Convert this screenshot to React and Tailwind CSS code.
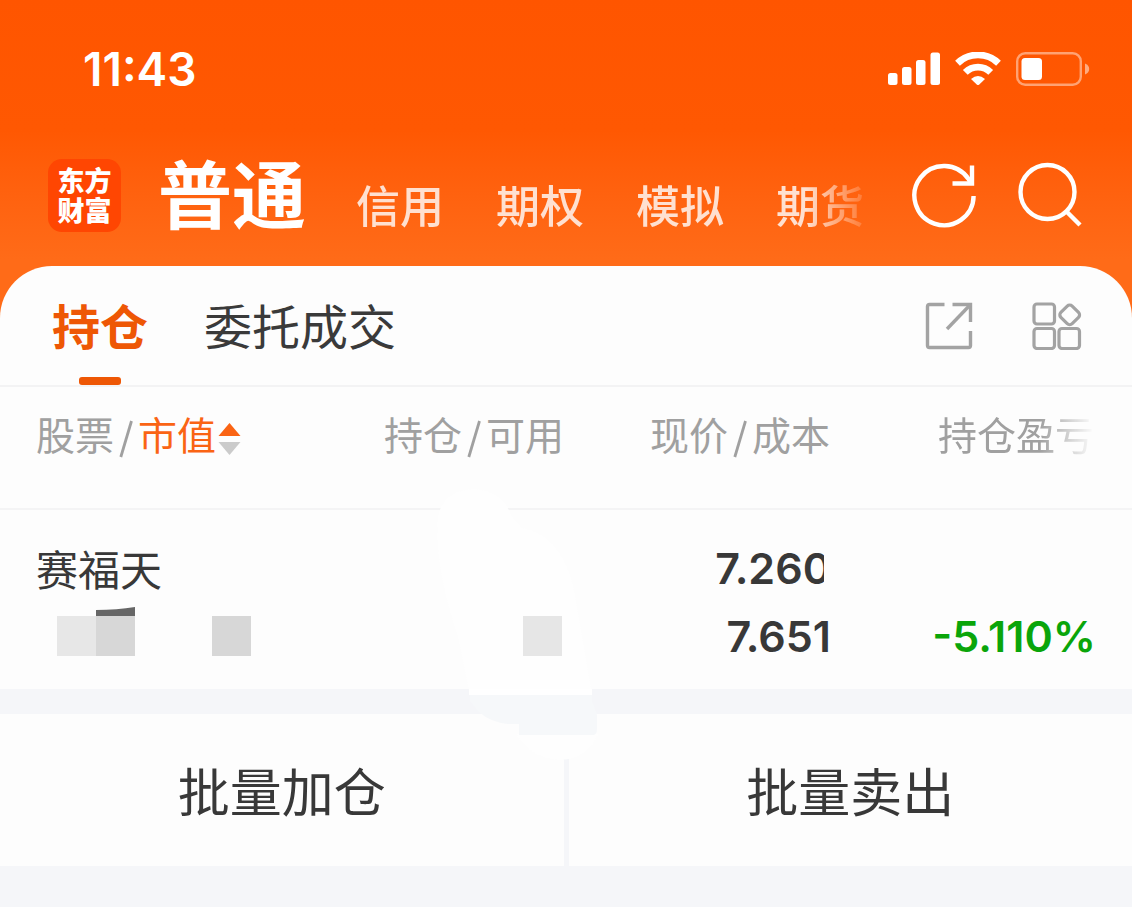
import React, { useState } from 'react';

const ACCOUNTS = ['信用', '期权', '模拟', '期货'];
const TABS = ['持仓', '委托成交'];

function SignalIcon() {
  return (
    <svg className="w-[52px] h-[34px]" viewBox="0 0 52 34" fill="#fff">
      <rect x="0" y="21" width="9.5" height="12" rx="2.5" />
      <rect x="14" y="15" width="9.5" height="18" rx="2.5" />
      <rect x="28" y="8" width="9.5" height="25" rx="2.5" />
      <rect x="42.5" y="0.5" width="9.5" height="32.5" rx="2.5" />
    </svg>
  );
}

function WifiIcon() {
  return (
    <svg className="w-[46px] h-[34px]" viewBox="0 0 46 34" fill="none" stroke="#fff" strokeWidth="6.8">
      <path d="M2.5 11.2 A29.5 29.5 0 0 1 43.5 11.2" />
      <path d="M10.3 20.4 A18 18 0 0 1 35.7 20.4" />
      <path d="M16 27 Q23 21 30 27 L24 32.7 Q23 33.5 22 32.7 Z" fill="#fff" stroke="none" />
    </svg>
  );
}

function BatteryIcon() {
  return (
    <svg className="w-[74px] h-[34px]" viewBox="0 0 74 34" fill="none">
      <rect x="1.2" y="1.2" width="63.6" height="31.6" rx="8" stroke="#fff" strokeOpacity="0.45" strokeWidth="2.4" />
      <rect x="5.5" y="6" width="20.5" height="22" rx="3.5" fill="#fff" />
      <path d="M69 11.5 C74.6 13.5 74.6 20.5 69 22.5 Z" fill="#fff" fillOpacity="0.5" />
    </svg>
  );
}

function RefreshIcon() {
  return (
    <svg className="w-[66px] h-[66px]" viewBox="0 0 66 66" fill="none" stroke="#fff" strokeWidth="4.4">
      <path d="M62.6 34 A29.6 29.6 0 1 1 57.5 17 L60 21.5" />
      <path d="M61 3.5 V21.5 H41.5" />
    </svg>
  );
}

function SearchIcon() {
  return (
    <svg className="w-[66px] h-[66px]" viewBox="0 0 66 66" fill="none" stroke="#fff" strokeWidth="4.4">
      <circle cx="31.5" cy="30" r="27" />
      <path d="M50.5 49.5 L64 63" />
    </svg>
  );
}

function ExportIcon() {
  return (
    <svg className="w-12 h-12" viewBox="0 0 48 48" fill="none" stroke="#a3a3a3" strokeWidth="3.4">
      <path d="M19.5 2.5 H4.5 Q2.5 2.5 2.5 4.5 V43.5 Q2.5 45.5 4.5 45.5 H43.5 Q45.5 45.5 45.5 43.5 V29" />
      <path d="M27.5 2.5 H45.5 V20" />
      <path d="M45.5 2.5 L22 27" />
    </svg>
  );
}

function GridIcon() {
  return (
    <svg className="w-[50px] h-12" viewBox="0 0 50 48" fill="none" stroke="#a3a3a3" strokeWidth="3.2">
      <rect x="2" y="2" width="20.5" height="20" rx="3" />
      <rect x="2" y="26.5" width="20.5" height="20" rx="3" />
      <rect x="27" y="26.5" width="20.5" height="20" rx="3" />
      <rect x="29.7" y="4.9" width="16" height="16" rx="3.5" transform="rotate(45 37.7 12.9)" />
    </svg>
  );
}

function SortIcon() {
  return (
    <svg className="inline-block align-middle w-[23px] h-8 ml-0.5" viewBox="0 0 23 32">
      <path d="M11.5 0 L22.5 13 H0.5 Z" fill="#fa6414" />
      <path d="M11.5 32 L22.5 19 H0.5 Z" fill="#cbcbcb" />
    </svg>
  );
}

function Slash() {
  return (
    <svg className="inline-block align-middle w-[14px] h-[38px] mx-[5px]" viewBox="0 0 14 38" fill="none" stroke="#a0a0a0" strokeWidth="2.8">
      <path d="M12.5 1 L1.8 37" />
    </svg>
  );
}

// Amounts hidden behind mosaic blocks
function MaskedAmount() {
  return (
    <svg className="w-[194px] h-[50px] mt-[5px] ml-[21px]" viewBox="0 0 194 50">
      <path d="M39 3 Q60 3 78 0 V10 H39 Z" fill="#666" />
      <rect x="0" y="9" width="39" height="40" fill="#e7e7e7" />
      <rect x="39" y="9" width="39" height="40" fill="#d7d7d7" />
      <rect x="155" y="9" width="39" height="40" fill="#d7d7d7" />
    </svg>
  );
}

// Painted-over area across the quantity column
function Smudge() {
  return (
    <svg className="absolute left-[430px] top-[220px] w-[170px] h-[280px] pointer-events-none" viewBox="0 0 170 280">
      <path d="M8 30 Q14 4 45 3 Q74 6 81 30 L92 42 Q134 50 145 110 L162 209 H40 L28 150 Q4 80 8 30 Z" fill="#fefefe" />
      <path d="M86 248 H168 Q160 272 130 274 Q100 272 86 248 Z" fill="#fefefe" />
      <path d="M40 209 H162 V215 L167 229 V242 Q167 248 164 249 H89 V238 H78 Q60 236 49 226 L40 215 Z" fill="#f6f8fa" />
      <rect x="39" y="203" width="123" height="6" fill="#fff" />
    </svg>
  );
}

function Header() {
  return (
    <header className="px-12 pt-[35px] pb-[18px] text-white">
      <div className="flex items-center justify-between h-[68px] pl-[35px]">
        <span className="font-['Inter',sans-serif] text-[46px] font-semibold">11:43</span>
        <div className="flex items-center gap-[15px] -mr-[6px]">
          <SignalIcon />
          <WifiIcon />
          <BatteryIcon />
        </div>
      </div>
      <div className="flex items-center h-[106px] mt-[39px]">
        <div className="shrink-0 grid place-content-center text-center w-[73px] h-[73px] rounded-[14px] bg-[#ff4602] text-[27px] leading-[30px] font-black">
          <span>东方</span>
          <span>财富</span>
        </div>
        <nav className="flex-1 flex items-baseline ml-[37px] pb-2 whitespace-nowrap">
          <button className="text-[74px] leading-[108px] font-bold">普通</button>
          <div className="flex-1 flex gap-[52px] ml-[50px] text-[44px] leading-[66px] font-medium text-[#ffe0d0] mask-r-from-88% mask-r-to-102%">
            {ACCOUNTS.map((name) => (
              <button key={name} className="shrink-0">{name}</button>
            ))}
          </div>
        </nav>
        <div className="shrink-0 flex gap-[39px] ml-11 mr-0.5">
          <button aria-label="刷新"><RefreshIcon /></button>
          <button aria-label="搜索"><SearchIcon /></button>
        </div>
      </div>
    </header>
  );
}

function TabBar() {
  const [active, setActive] = useState('持仓');
  return (
    <div className="flex items-center justify-between h-[121px] pl-[52px] pr-[50px] border-b-2 border-[#f3f3f4]">
      <div className="flex gap-14 self-stretch text-5xl">
        {TABS.map((tab) => (
          <button
            key={tab}
            onClick={() => setActive(tab)}
            className={`relative pb-1 ${tab === active ? 'font-bold text-[#ee5705]' : 'text-[#3a3a3a]'}`}
          >
            {tab}
            {tab === active && (
              <span className="absolute bottom-0 left-1/2 -translate-x-1/2 w-[42px] h-2 rounded-[3px] bg-[#ee5705]" />
            )}
          </button>
        ))}
      </div>
      <div className="flex gap-[59px]">
        <button aria-label="分享"><ExportIcon /></button>
        <button aria-label="更多"><GridIcon /></button>
      </div>
    </div>
  );
}

function Holdings() {
  return (
    <table className="w-full table-fixed">
      <colgroup>
        <col className="w-[27%]" />
        <col className="w-[23%]" />
        <col />
        <col className="w-[26.5%]" />
      </colgroup>
      <thead>
        <tr className="h-[122px] border-b-2 border-[#f4f4f5] text-[39px] leading-[52px] text-[#a0a0a0] whitespace-nowrap">
          <th className="pl-9 pb-[30px] text-left font-normal">
            <button>
              股票<Slash /><span className="text-[#fa6414]">市值</span><SortIcon />
            </button>
          </th>
          <th className="pb-[30px] pr-0.5 text-right font-normal">持仓<Slash />可用</th>
          <th className="pb-[30px] pr-0.5 text-right font-normal">现价<Slash />成本</th>
          <th className="pb-[30px] pr-[38px] text-right font-normal">
            <span className="mask-r-from-65% mask-r-to-100%">持仓盈亏</span>
          </th>
        </tr>
      </thead>
      <tbody>
        <tr className="h-[180px] align-top text-[42px] leading-[68px] text-[#383838]">
          <td className="pl-9 pt-6">
            <div>赛福天</div>
            <MaskedAmount />
          </td>
          <td className="pt-6">
            <div className="relative z-10 ml-auto mt-[82px] mr-1 w-[39px] h-10 bg-[#e6e6e6]" />
          </td>
          <td className="pt-6 pr-px text-right font-['Inter',sans-serif] text-[43px] font-semibold">
            <div className="relative">
              7.260
              <span className="absolute right-0 top-2 w-[7px] h-[52px] bg-[#fdfdfd]" />
            </div>
            <div>7.651</div>
          </td>
          <td className="pt-[92px] pr-9 text-right font-['Inter',sans-serif] text-[43px] font-semibold text-[#0aa50a]">
            -5.110%
          </td>
        </tr>
      </tbody>
    </table>
  );
}

export default function App() {
  return (
    <div className="min-h-screen bg-[#f5f6f9] font-['Noto_Sans_CJK_SC',sans-serif]">
      <div className="bg-linear-to-b from-[#ff5500] from-0% via-[#ff5802] via-15% to-[#ff6b18] to-30%">
        <Header />
        <main className="relative rounded-t-[52px] bg-[#fdfdfd]">
          <TabBar />
          <Holdings />
          <div className="h-[25px] bg-[#f5f6f9]" />
          <div className="grid grid-cols-2 gap-[5px] h-[152px] bg-[#f5f6f9] text-[52px] text-[#383838]">
            <button className="bg-[#fdfdfd]">批量加仓</button>
            <button className="bg-[#fdfdfd]">批量卖出</button>
          </div>
          <Smudge />
        </main>
      </div>
    </div>
  );
}
